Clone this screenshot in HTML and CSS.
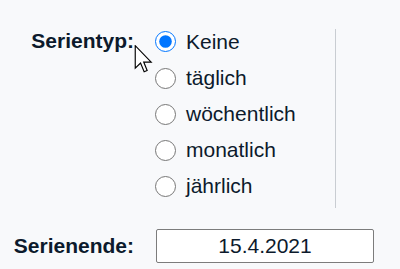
FILE: index.html
```html
<!DOCTYPE html>
<html lang="de">
<head>
<meta charset="utf-8">
<title>Serie</title>
<link rel="stylesheet" href="styles.css">
</head>
<body>
<div class="form">
  <div class="row row-type">
    <div class="label label-type">Serientyp:</div>
    <div class="options">
      <label class="opt"><input type="radio" name="typ" checked><span>Keine</span></label>
      <label class="opt"><input type="radio" name="typ"><span>täglich</span></label>
      <label class="opt"><input type="radio" name="typ"><span>wöchentlich</span></label>
      <label class="opt"><input type="radio" name="typ"><span>monatlich</span></label>
      <label class="opt"><input type="radio" name="typ"><span>jährlich</span></label>
    </div>
    <div class="divider"></div>
  </div>
  <div class="row row-end">
    <div class="label">Serienende:</div>
    <input class="date" type="text" value="15.4.2021">
  </div>
</div>
<svg class="cursor" width="19" height="28" viewBox="0 0 12.5 19.5" aria-hidden="true">
  <path d="M0.5 0.5 V16.2 L4.2 12.6 L6.7 18.6 L8.8 17.7 L6.4 11.9 H11.6 Z" fill="#ffffff" stroke="#000000" stroke-width="0.8" stroke-linejoin="miter"/>
</svg>
</body>
</html>
```

FILE: styles.css
```css
html, body {
  margin: 0;
  padding: 0;
  background: #f8f9fb;
}
body {
  font-family: "Liberation Sans", Arial, sans-serif;
  font-size: 21px;
  color: #0c1a2c;
  position: relative;
  width: 400px;
  height: 269px;
  overflow: hidden;
}
.form {
  padding-top: 24px;
}
.row {
  display: flex;
}
.label {
  width: 134px;
  text-align: right;
  font-weight: bold;
  flex: none;
}
.label-type {
  line-height: 36px;
  margin-top: -1px;
}
.options {
  margin-left: 21px;
  width: 180px;
  display: flex;
  flex-direction: column;
}
.opt {
  display: flex;
  align-items: center;
  height: 36px;
  line-height: 36px;
}
.opt input {
  appearance: auto;
  width: 21px;
  height: 21px;
  margin: 0 10px 0 0;
  flex: none;
}
.opt:first-child input {
  margin-top: -1px;
}
.divider {
  width: 1px;
  height: 179px;
  margin-top: 5px;
  background: #c9cdd2;
}
.row-end {
  margin-top: 21px;
  align-items: center;
}
.date {
  margin-left: 22px;
  width: 218px;
  height: 34px;
  box-sizing: border-box;
  border: 1px solid #7c7c7c;
  border-radius: 2px;
  background: #ffffff;
  font-family: "Liberation Sans", Arial, sans-serif;
  font-size: 21px;
  color: #0c1a2c;
  text-align: center;
  padding: 0;
}
.cursor {
  position: absolute;
  left: 134px;
  top: 45px;
}
```
